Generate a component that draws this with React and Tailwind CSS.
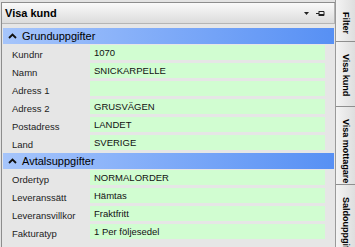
import React from "react";

const basic = [
    ["Kundnr", "1070"],
    ["Namn", "SNICKARPELLE"],
    ["Adress 1", ""],
    ["Adress 2", "GRUSVÄGEN"],
    ["Postadress", "LANDET"],
    ["Land", "SVERIGE"],
];

const terms = [
    ["Ordertyp", "NORMALORDER"],
    ["Leveranssätt", "Hämtas"],
    ["Leveransvillkor", "Fraktfritt"],
    ["Fakturatyp", "1 Per följesedel"],
];

const tabs = [
    { label: "Filter", h: "h-[42px]" },
    { label: "Visa kund", h: "h-[65px]" },
    { label: "Visa mottagare", h: "h-[78px]" },
    { label: "Saldouppgifter", h: "h-[90px]" },
];

function SectionHeader({ title }) {
    return (
        <div className="h-[16px] mr-[1px] flex items-center bg-gradient-to-r from-[#a6c5fb] via-[#7eaaf8] to-[#5790f4] text-black">
            <svg width="9" height="6" viewBox="0 0 9 6" className="ml-[5px] mr-[5px]">
                <path d="M1 5 L4.5 1.5 L8 5" fill="none" stroke="#111" strokeWidth="1.8" />
            </svg>
            <span className="text-[11px] leading-none font-['Liberation_Sans',Arial,sans-serif]">{title}</span>
        </div>
    );
}

function Row({ label, value }) {
    return (
        <div className="h-[18px] flex">
            <div className="w-[87px] pl-[9px] pt-[5px] text-[9.5px] leading-none text-[#222] font-['Liberation_Sans',Arial,sans-serif]">
                {label}
            </div>
            <div className="w-[235px] h-[15px] bg-[#d1fdd1] pl-[4px] flex items-center text-[9.5px] leading-none text-[#111] font-['Liberation_Sans',Arial,sans-serif]">
                {value}
            </div>
        </div>
    );
}

export default function App() {
    return (
        <div className="w-[355px] h-[247px] bg-[#e3e3e3] flex overflow-hidden">
            {/* Main panel */}
            <div className="w-[335px] pt-[2px] pl-[1px] flex flex-col">
                <div className="flex-1 border-l border-t border-[#8d8d8d] bg-[#e6e6e6] flex flex-col">
                    {/* Title bar */}
                    <div className="h-[21px] flex items-center border-b border-r border-[#b5b5b5] bg-gradient-to-b from-[#fafafa] to-[#dcdcdc]">
                        <span className="pl-[3px] text-[11px] font-bold leading-none font-['Liberation_Sans',Arial,sans-serif] text-black">
                            Visa kund
                        </span>
                        <div className="ml-auto flex items-center gap-[7px] pr-[9px]">
                            <svg width="5" height="3" viewBox="0 0 5 3">
                                <path d="M0 0 H5 L2.5 3 Z" fill="#222" />
                            </svg>
                            <svg width="9" height="7" viewBox="0 0 9 7">
                                <path d="M0 3.5 H3 M3 1 V6 M3 1.5 H8 V5.5 H3 M3 4.5 H8" fill="none" stroke="#222" strokeWidth="1" />
                            </svg>
                        </div>
                    </div>
                    <div className="pt-[4px] pl-[1px]">
                        <SectionHeader title="Grunduppgifter" />
                        <div className="pt-[1px]">
                            {basic.map(([l, v]) => (
                                <Row key={l} label={l} value={v} />
                            ))}
                        </div>
                        <SectionHeader title="Avtalsuppgifter" />
                        <div className="pt-[1px]">
                            {terms.map(([l, v]) => (
                                <Row key={l} label={l} value={v} />
                            ))}
                        </div>
                    </div>
                </div>
            </div>

            {/* Side tabs */}
            <div className="w-[20px] border-l border-[#9a9a9a] bg-[#d8d8d8] flex flex-col">
                {tabs.map((t) => (
                    <div
                        key={t.label}
                        className={`${t.h} shrink-0 border-b border-[#8f8f8f] bg-gradient-to-r from-[#f4f4f4] to-[#dedede] flex justify-center pt-[12px] overflow-hidden`}
                    >
                        <span className="[writing-mode:vertical-rl] text-[9px] font-bold leading-none font-['Liberation_Sans',Arial,sans-serif] text-black whitespace-nowrap">
                            {t.label}
                        </span>
                    </div>
                ))}
            </div>
        </div>
    );
}
